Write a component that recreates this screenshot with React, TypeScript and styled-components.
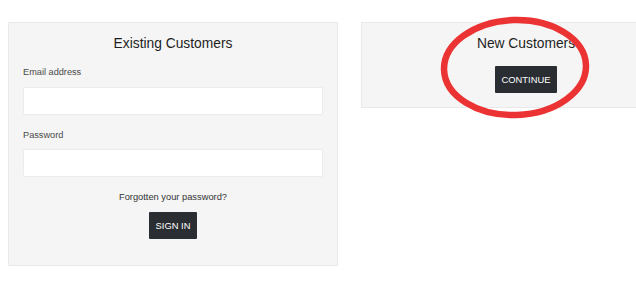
import React from "react";
import styled, { createGlobalStyle } from "styled-components";

const GlobalStyle = createGlobalStyle`
  html, body {
    margin: 0;
    padding: 0;
    background: #ffffff;
    overflow: hidden;
  }
  body {
    font-family: "Liberation Sans", Arial, sans-serif;
  }
`;

const Page = styled.div`
  position: relative;
  width: 636px;
  height: 289px;
  overflow: hidden;
  box-sizing: border-box;
  padding: 22px 0 0 8px;
  display: grid;
  grid-template-columns: 330px 330px;
  column-gap: 23px;
  align-items: start;
`;

const Panel = styled.section<{ $bottom: number }>`
  box-sizing: border-box;
  background: #f5f5f5;
  border: 1px solid #e9e9e9;
  padding: 11px 14px ${(p) => p.$bottom}px 14px;
  display: flex;
  flex-direction: column;
`;

const Title = styled.h2`
  margin: 0;
  font-size: 13.8px;
  line-height: 20px;
  font-weight: normal;
  color: #1e1e1e;
  text-align: center;
`;

const Label = styled.label<{ $top: number }>`
  display: block;
  margin-top: ${(p) => p.$top}px;
  font-size: 9.2px;
  line-height: 14px;
  color: #4a4a4a;
`;

const Input = styled.input<{ $top: number }>`
  display: block;
  box-sizing: border-box;
  width: 100%;
  height: 28px;
  margin-top: ${(p) => p.$top}px;
  background: #ffffff;
  border: 1px solid #ececec;
  border-radius: 2px;
  outline: none;
`;

const Forgot = styled.a`
  display: block;
  margin-top: 13px;
  font-size: 9.3px;
  line-height: 14px;
  color: #333333;
  text-align: center;
  text-decoration: none;
`;

const DarkButton = styled.button<{ $top: number; $pad: number }>`
  align-self: center;
  margin-top: ${(p) => p.$top}px;
  height: 27px;
  padding: 0 ${(p) => p.$pad}px;
  border: none;
  border-radius: 1px;
  background: #2a2e33;
  color: #ffffff;
  font-family: "Liberation Sans", Arial, sans-serif;
  font-size: 9.4px;
  letter-spacing: 0;
  cursor: pointer;
`;

const Highlight = styled.svg`
  position: absolute;
  left: 438px;
  top: 14px;
  width: 154px;
  height: 108px;
  pointer-events: none;
`;

export default function App() {
  return (
    <>
      <GlobalStyle />
      <Page>
        <Panel $bottom={26}>
          <Title>Existing Customers</Title>
          <Label $top={11}>Email address</Label>
          <Input type="email" $top={8} />
          <Label $top={13}>Password</Label>
          <Input type="password" $top={7} />
          <Forgot href="#">Forgotten your password?</Forgot>
          <DarkButton $top={8} $pad={7}>SIGN IN</DarkButton>
        </Panel>
        <Panel $bottom={14}>
          <Title>New Customers</Title>
          <DarkButton $top={12} $pad={7}>CONTINUE</DarkButton>
        </Panel>
        <Highlight viewBox="0 0 154 108">
          <ellipse
            cx="77"
            cy="53.5"
            rx="71"
            ry="47.5"
            fill="none"
            stroke="#ec3334"
            strokeWidth="6.5"
            transform="rotate(-2 77 53.5)"
          />
        </Highlight>
      </Page>
    </>
  );
}
